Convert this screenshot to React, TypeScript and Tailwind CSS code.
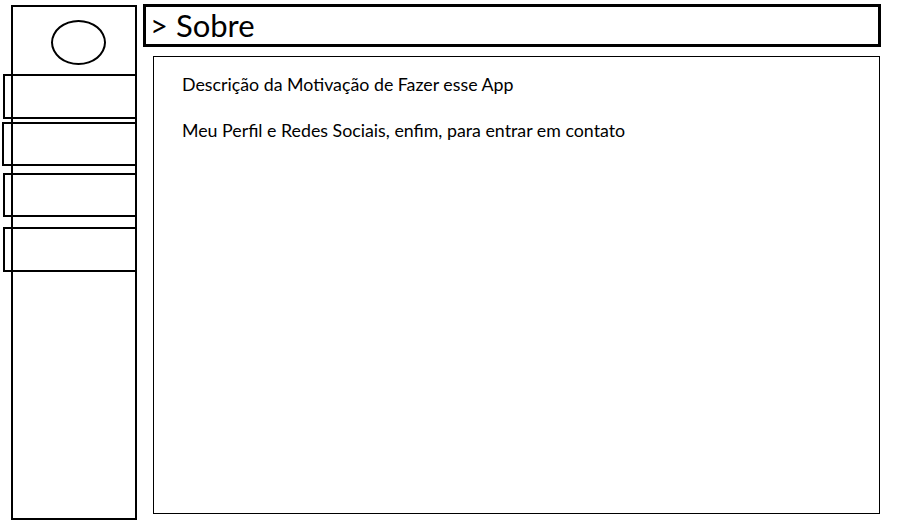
export default function App() {
  const navItems = [
    "mt-[67px] -ml-[10px] w-[134px] h-[45px]",
    "mt-[3px] -ml-[11px] w-[135px] h-[44px]",
    "mt-[7px] -ml-[10px] w-[134px] h-[44px]",
    "mt-[10px] -ml-[10px] w-[134px] h-[45px]",
  ];

  return (
    <div className="w-[913px] h-[523px] bg-white text-black font-['Lato','Liberation_Sans',sans-serif] flex">
      {/* sidebar */}
      <aside className="ml-[11px] mt-[5px] w-[126px] h-[515px] border-2 border-black flex flex-col shrink-0">
        <div className="relative">
          <div className="absolute left-[38px] top-[13px] w-[55px] h-[45px] rounded-[50%] border-2 border-black" />
        </div>
        {navItems.map((cls, i) => (
          <div key={i} className={`${cls} border-2 border-black shrink-0`} />
        ))}
      </aside>

      {/* main */}
      <main className="ml-[6px] mt-[4px] flex flex-col">
        <header className="w-[738px] h-[43px] border-[3px] border-black flex items-center pl-[4px]">
          <span className="text-[31px] leading-none">&gt; Sobre</span>
        </header>
        <section className="ml-[10px] mt-[9px] w-[727px] h-[458px] border border-black pl-[28px] pt-[15px] text-[17.8px]">
          <p className="leading-[24px]">Descrição da Motivação de Fazer esse App</p>
          <p className="leading-[24px] mt-[22px]">Meu Perfil e Redes Sociais, enfim, para entrar em contato</p>
        </section>
      </main>
    </div>
  );
}
